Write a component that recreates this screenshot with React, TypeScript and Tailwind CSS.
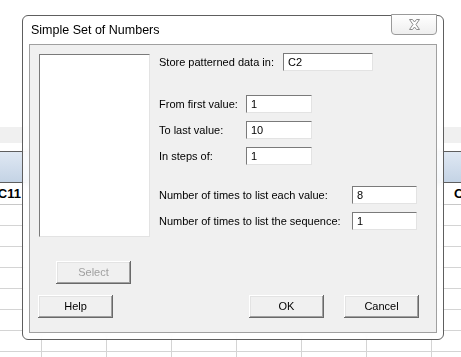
import React from "react";

function Btn({ children, disabled }: { children: React.ReactNode; disabled?: boolean }) {
  return (
    <div
      className={
        "w-[75px] h-[23px] flex items-center justify-center text-[11px] bg-[#f0f0f0] shadow-[inset_-1px_-1px_#696969,inset_1px_1px_#ffffff,inset_-2px_-2px_#a0a0a0,inset_2px_2px_#e3e3e3] " +
        (disabled ? "text-[#a0a0a0]" : "text-black")
      }
    >
      {children}
    </div>
  );
}

function Field({ value, w }: { value: string; w: string }) {
  return (
    <div
      className={
        "h-[18px] bg-white flex items-center pl-[4px] text-[11px] text-black border border-t-[#7a7a7a] border-l-[#7a7a7a] border-r-[#e3e3e3] border-b-[#e3e3e3] " +
        w
      }
    >
      {value}
    </div>
  );
}

export default function App() {
  const headers = ["C11", "", "", "", "", "", "", "C"];
  const rows = Array.from({ length: 8 });
  return (
    <div className="relative w-[461px] h-[357px] overflow-hidden bg-white font-['Liberation_Sans',Arial,sans-serif]">
      {/* spreadsheet behind */}
      <div className="flex flex-col">
        <div className="h-[127px] bg-white" />
        <div className="h-[16px] bg-[#f0f0f0]" />
        <div className="h-[8px] bg-white" />
        <div className="h-px bg-[#5f5f5f]" />
        <div className="h-[30px] bg-gradient-to-b from-[#dfe8f3] to-[#c4d3e5]" />
        <div className="h-px bg-[#5f5f5f]" />
        <div className="flex h-[22px] border-b border-[#c8c8c8] -ml-[23px]">
          {headers.map((h, i) => (
            <div
              key={i}
              className={
                "w-[65px] shrink-0 flex items-center text-[13px] font-bold text-black " +
                (i === 0 ? "justify-end pr-[21px]" : "justify-start pl-[22px]")
              }
            >
              {h}
            </div>
          ))}
        </div>
        {rows.map((_, i) => (
          <div key={i} className="flex h-[21px] border-b border-[#d4d4d4] -ml-[23px]">
            {headers.map((_, j) => (
              <div key={j} className="w-[65px] shrink-0 border-r border-[#d4d4d4]" />
            ))}
          </div>
        ))}
      </div>

      {/* dialog window */}
      <div className="absolute left-[22px] top-[15px] w-[422px] h-[325px] rounded-[6px] border border-[#5e5e5e] bg-white/85 backdrop-blur-[3px] flex flex-col px-[6px] pb-[6px]">
        <div className="h-[28px] flex items-center pl-[2px] text-[12.5px] text-black">Simple Set of Numbers</div>
        <div className="absolute top-[-2px] right-[6px] w-[46px] h-[21px] rounded-b-[4px] border border-[#9a9a9a] bg-gradient-to-b from-white to-[#eeeeee] flex items-center justify-center">
          <svg width="13" height="11" viewBox="0 0 13 11">
            <path
              d="M1.5 0.5 H4.5 L6.5 3 L8.5 0.5 H11.5 L8 5.5 L11.5 10.5 H8.5 L6.5 8 L4.5 10.5 H1.5 L5 5.5 Z"
              fill="#ffffff"
              stroke="#8c8c8c"
              strokeWidth="1"
            />
          </svg>
        </div>
        <div className="flex-1 border border-[#a0a0a0] bg-[#f0f0f0] flex flex-col text-[11px] text-black">
          <div className="flex pl-[9px] pt-[9px]">
            <div className="flex flex-col w-[111px]">
              <div className="h-[183px] bg-white border border-t-[#7a7a7a] border-l-[#7a7a7a] border-r-[#e3e3e3] border-b-[#e3e3e3]" />
              <div className="mt-[24px] ml-[17px]">
                <Btn disabled>Select</Btn>
              </div>
            </div>
            <div className="flex flex-col ml-[9px] -mt-[1px]">
              <div className="flex items-center">
                <div className="w-[124px]">Store patterned data in:</div>
                <Field value="C2" w="w-[90px]" />
              </div>
              <div className="flex items-center mt-[24px]">
                <div className="w-[87px]">From first value:</div>
                <Field value="1" w="w-[66px]" />
              </div>
              <div className="flex items-center mt-[8px]">
                <div className="w-[87px]">To last value:</div>
                <Field value="10" w="w-[66px]" />
              </div>
              <div className="flex items-center mt-[8px]">
                <div className="w-[87px]">In steps of:</div>
                <Field value="1" w="w-[66px]" />
              </div>
              <div className="flex items-center mt-[21px]">
                <div className="w-[193px]">Number of times to list each value:</div>
                <Field value="8" w="w-[65px]" />
              </div>
              <div className="flex items-center mt-[8px]">
                <div className="w-[193px]">Number of times to list the sequence:</div>
                <Field value="1" w="w-[65px]" />
              </div>
            </div>
          </div>
          <div className="flex items-center mt-[11px] pl-[8px]">
            <Btn>Help</Btn>
            <div className="ml-[136px]">
              <Btn>OK</Btn>
            </div>
            <div className="ml-[20px]">
              <Btn>Cancel</Btn>
            </div>
          </div>
        </div>
      </div>
    </div>
  );
}
